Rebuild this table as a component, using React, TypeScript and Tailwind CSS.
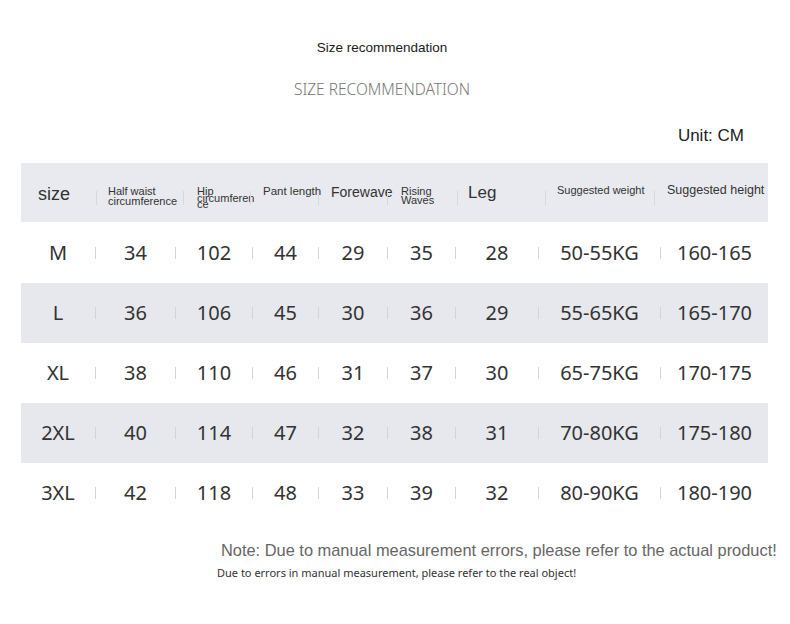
import React from 'react';

const bodyCols = 'grid grid-cols-[74px_80px_77px_66px_69px_68px_83px_122px_108px]';
const headCols = 'grid grid-cols-[75px_87px_67px_68px_69px_70px_88px_109px_114px]';

const rows = [
  ['M', '34', '102', '44', '29', '35', '28', '50-55KG', '160-165'],
  ['L', '36', '106', '45', '30', '36', '29', '55-65KG', '165-170'],
  ['XL', '38', '110', '46', '31', '37', '30', '65-75KG', '170-175'],
  ['2XL', '40', '114', '47', '32', '38', '31', '70-80KG', '175-180'],
  ['3XL', '42', '118', '48', '33', '39', '32', '80-90KG', '180-190'],
];

const HeadCell = ({ first, pad, children }: { first?: boolean; pad: string; children: React.ReactNode }) => (
  <div className="flex items-start">
    {!first && <span className="mt-[28px] h-[14px] w-px shrink-0 bg-[#d6d8dd]" />}
    <div className={`flex-1 ${pad}`}>{children}</div>
  </div>
);

const App = () => {
  return (
    <div className="w-[790px] h-[624px] bg-white text-[#333] font-['Liberation_Sans',Arial,sans-serif]">
      <div className="pt-[40px] pr-[26px] text-center">
        <div className="h-[16px] leading-[16px] text-[13.5px] text-[#1a1a1a]">Size recommendation</div>
        <div className="mt-[23px] h-[20px] leading-[20px] text-[15.5px] font-light text-[#777] font-['Noto_Sans',sans-serif]">
          SIZE RECOMMENDATION
        </div>
      </div>
      <div className="mt-[27px] h-[20px] leading-[20px] pr-[46px] text-right text-[17px] text-[#222]">Unit: CM</div>

      <div className="mt-[17px] ml-[21px] w-[747px]">
        <div className={`${headCols} h-[59px] bg-[#e8eaef]`}>
          <HeadCell first pad="pl-[17px] pt-[21px]">
            <div className="text-[18px] leading-[20px]">size</div>
          </HeadCell>
          <HeadCell pad="pl-[11px] pt-[23px]">
            <div className="text-[11px] leading-[10px]">
              Half waist
              <br />
              circumference
            </div>
          </HeadCell>
          <HeadCell pad="pl-[13px] pt-[25px]">
            <div className="w-[60px] break-words text-[11px] leading-[6.5px]">Hip circumference</div>
          </HeadCell>
          <HeadCell pad="pl-[12px] pt-[22px]">
            <div className="text-[11.5px] leading-[12px] whitespace-nowrap">Pant length</div>
          </HeadCell>
          <HeadCell pad="pl-[12px] pt-[21px]">
            <div className="text-[14px] leading-[16px] whitespace-nowrap">Forewave</div>
          </HeadCell>
          <HeadCell pad="pl-[13px] pt-[24px]">
            <div className="text-[11px] leading-[9px]">
              Rising
              <br />
              Waves
            </div>
          </HeadCell>
          <HeadCell pad="pl-[10px] pt-[20px]">
            <div className="text-[17px] leading-[20px]">Leg</div>
          </HeadCell>
          <HeadCell pad="pl-[11px] pt-[21px]">
            <div className="text-[11px] leading-[12px] whitespace-nowrap">Suggested weight</div>
          </HeadCell>
          <HeadCell pad="pl-[12px] pt-[20px]">
            <div className="text-[12.5px] leading-[14px] whitespace-nowrap">Suggested height</div>
          </HeadCell>
        </div>

        {rows.map((r, i) => (
          <div
            key={r[0]}
            className={`${bodyCols} ${i === 0 ? 'h-[61px]' : 'h-[60px]'} ${i % 2 === 1 ? 'bg-[#e6e8ee]' : 'bg-white'} font-['Noto_Sans',sans-serif] text-[20px] text-[#333]`}
          >
            {r.map((v, j) => (
              <div key={j} className="flex items-center">
                {j > 0 && <span className="h-[12px] w-px shrink-0 bg-[#d2d4d9]" />}
                <span className="flex-1 text-center leading-[24px] whitespace-nowrap">{v}</span>
              </div>
            ))}
          </div>
        ))}
      </div>

      <div className="mt-[17px] ml-[221px] h-[20px] leading-[20px] text-[16.4px] text-[#666] whitespace-nowrap">
        Note: Due to manual measurement errors, please refer to the actual product!
      </div>
      <div className="mt-[6px] ml-[217px] h-[14px] leading-[14px] text-[11px] text-[#333] font-['Noto_Sans',sans-serif] whitespace-nowrap">
        Due to errors in manual measurement, please refer to the real object!
      </div>
    </div>
  );
};

export default App;
